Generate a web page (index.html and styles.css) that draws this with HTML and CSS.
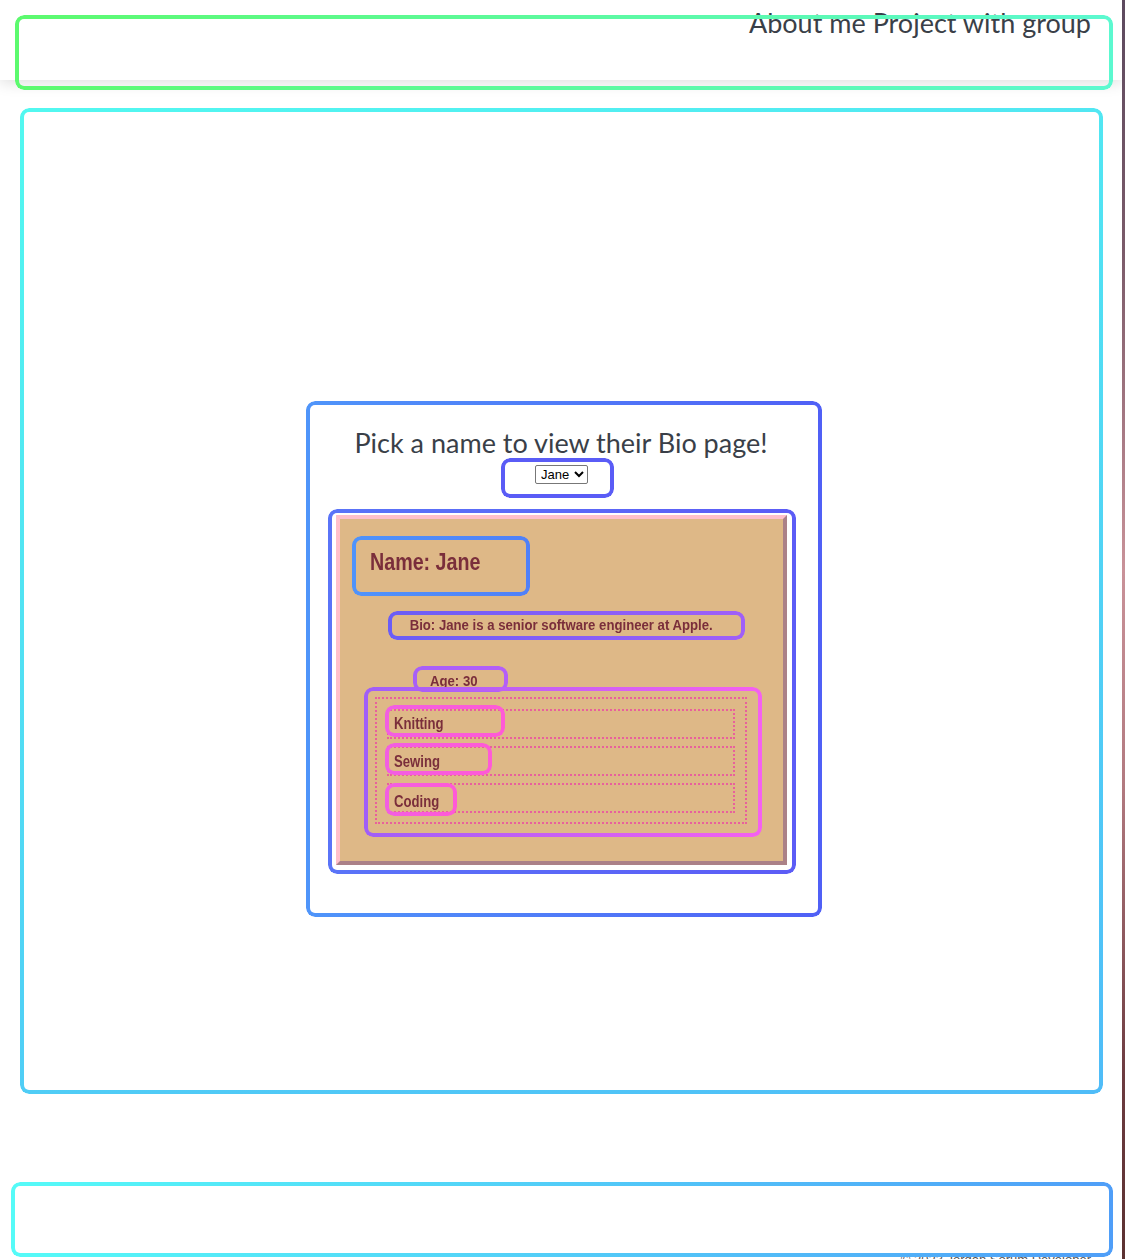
FILE: index.html
```html
<!DOCTYPE html>
<html lang="en">
<head>
    <meta charset="UTF-8">
    <meta name="viewport" content="width=device-width, initial-scale=1.0">
    <title>About me</title>
    <link rel="stylesheet" href="styles.css">
</head>
<body>
    <div class="page">
        <header class="top box">
            <h1 class="site-title">About me Project with group</h1>
        </header>

        <main class="content box">
            <section class="picker box">
                <h2 class="picker-title">Pick a name to view their Bio page!</h2>
                <div class="select-wrap box">
                    <select id="person">
                        <option>Jane</option>
                        <option>John</option>
                        <option>Mary</option>
                    </select>
                </div>
                <div class="bio-wrap box">
                    <div class="bio-card">
                        <h3 class="bio-name box"><span class="narrow">Name: Jane</span></h3>
                        <p class="bio-text box"><span class="narrow">Bio: Jane is a senior software engineer at Apple.</span></p>
                        <p class="bio-age box"><span class="narrow">Age: 30</span></p>
                        <div class="hobbies box">
                            <ul class="hobby-list">
                                <li><span class="hobby box"><span class="narrow">Knitting</span></span></li>
                                <li><span class="hobby box"><span class="narrow">Sewing</span></span></li>
                                <li><span class="hobby box"><span class="narrow">Coding</span></span></li>
                            </ul>
                        </div>
                    </div>
                </div>
            </section>
        </main>

        <footer class="bottom">
            <div class="footer-box box"></div>
            <p class="copy">© 2023 Jordan Sorum Developer</p>
        </footer>
    </div>
</body>
</html>
```

FILE: styles.css
```css
html {
    background: linear-gradient(to bottom, #5d4a5f 0%, #7b5b6a 20%, #c99299 45%, #b27a80 62%, #6c3b40 85%, #5b3131 100%);
    min-height: 100%;
}
body {
    margin: 0;
    font-family: "Liberation Sans", Arial, sans-serif;
}
.page {
    width: 1122px;
    min-height: 1259px;
    background: #fff;
    overflow: hidden;
}

/* outline boxes drawn over each block */
.box {
    position: relative;
}
.box::after {
    content: "";
    position: absolute;
    inset: var(--inset, 0);
    padding: 4px;
    border-radius: 9px;
    background: var(--grad, #5a5cf6);
    -webkit-mask: linear-gradient(#000 0 0) content-box, linear-gradient(#000 0 0);
    -webkit-mask-composite: xor;
    mask-composite: exclude;
    pointer-events: none;
    z-index: 2;
}

/* header */
.top {
    height: 80px;
    background: #fff;
    box-shadow: 0 3px 14px rgba(0, 0, 0, 0.13);
    text-align: right;
    --inset: 15px 9px -10px 15px;
    --grad: linear-gradient(90deg, #5cfa6e, #5cf9d0);
}
.site-title {
    margin: 0;
    padding: 6px 31px 0 0;
    font-family: Lato, "Open Sans", sans-serif;
    font-weight: 400;
    font-size: 27px;
    color: #3a3f48;
}

/* main area */
.content {
    margin: 28px 19px 0 20px;
    height: 986px;
    display: flex;
    justify-content: center;
    align-items: flex-start;
    --grad: linear-gradient(160deg, #52f8f0, #4fbcf8);
}
.picker {
    margin-top: 293px;
    margin-left: 5px;
    width: 516px;
    height: 516px;
    background: #fff;
    text-align: center;
    --grad: linear-gradient(90deg, #4f95fa, #5060f6);
}
.picker-title {
    margin: 26px 6px 0 0;
    font-family: Lato, "Open Sans", sans-serif;
    font-weight: 400;
    font-size: 27px;
    line-height: 32px;
    color: #3a3f48;
}
.select-wrap {
    width: 113px;
    height: 40px;
    margin: -1px 0 0 195px;
    padding: 7px 0 0 34px;
    box-sizing: border-box;
    text-align: left;
    --grad: #5a5cf6;
}
.select-wrap select {
    font-family: "Liberation Sans", Arial, sans-serif;
    font-size: 13px;
    height: 19px;
    padding: 0 1px;
    border: 1px solid #777;
    border-radius: 2px;
    background: #fff;
    color: #000;
}

/* bio card */
.bio-wrap {
    margin: 11px 0 0 22px;
    width: 468px;
    height: 365px;
    padding: 6px 9px 9px 8px;
    box-sizing: border-box;
    text-align: left;
    --grad: linear-gradient(90deg, #5a74f8, #5c5cf6);
}
.bio-card {
    height: 350px;
    box-sizing: border-box;
    border: 4px outset pink;
    background: burlywood;
    color: #7a2e3b;
    font-family: "Liberation Sans Narrow", "Arial Narrow", "Liberation Sans", sans-serif;
    font-weight: bold;
    padding-top: 17px;
}
.narrow {
    display: inline-block;
    white-space: nowrap;
    transform: scaleX(0.82);
    transform-origin: left center;
}
.bio-name {
    margin: 0 0 0 12px;
    width: 178px;
    height: 60px;
    box-sizing: border-box;
    padding-left: 18px;
    font-size: 24px;
    line-height: 52px;
    --grad: linear-gradient(90deg, #4f93fb, #5080f8);
}
.bio-text {
    margin: 15px 0 0 48px;
    width: 357px;
    height: 29px;
    box-sizing: border-box;
    padding-right: 11px;
    font-size: 14px;
    line-height: 29px;
    text-align: center;
    --grad: linear-gradient(90deg, #6a5df6, #a05ff8);
}
.bio-text .narrow {
    transform: scaleX(0.94);
    transform-origin: center;
}
.bio-age {
    margin: 26px 0 0 73px;
    width: 95px;
    height: 26px;
    box-sizing: border-box;
    padding: 2px 0 0 17px;
    font-size: 14px;
    line-height: 26px;
    --grad: linear-gradient(90deg, #a75ff8, #b45ef8);
}
.bio-age .narrow {
    transform: scaleX(0.94);
}
.hobbies {
    margin: -5px 0 0 24px;
    width: 398px;
    height: 150px;
    box-sizing: border-box;
    padding: 10px 15px 0 11px;
    --grad: linear-gradient(90deg, #a05ef8, #f560f0);
}
.hobby-list {
    list-style: none;
    margin: 0;
    padding: 10px 10px 9px 10px;
    border: 2px dotted #e8609c;
    display: flex;
    flex-direction: column;
    gap: 7px;
}
.hobby-list li {
    height: 30px;
    box-sizing: border-box;
    border: 2px dotted #e8609c;
}
.hobby {
    display: block;
    height: 32px;
    box-sizing: border-box;
    margin: -6px 0 0 -4px;
    padding: 4px 0 0 9px;
    font-size: 16px;
    line-height: 30px;
    --grad: linear-gradient(90deg, #f25ee2, #ff5ad6);
}
.hobby-list li:nth-child(1) .hobby {
    width: 120px;
}
.hobby-list li:nth-child(2) .hobby {
    width: 107px;
    margin-top: -5px;
}
.hobby-list li:nth-child(3) .hobby {
    width: 72px;
    margin-top: -2px;
    height: 33px;
}

/* footer */
.bottom {
    margin: 88px 9px 0 11px;
    text-align: right;
}
.footer-box {
    height: 75px;
    --grad: linear-gradient(90deg, #55fbf8, #4f9ef8);
}
.copy {
    margin: -5px 22px 0 0;
    font-family: "Liberation Sans", Arial, sans-serif;
    font-size: 13px;
    color: #555;
}
```
